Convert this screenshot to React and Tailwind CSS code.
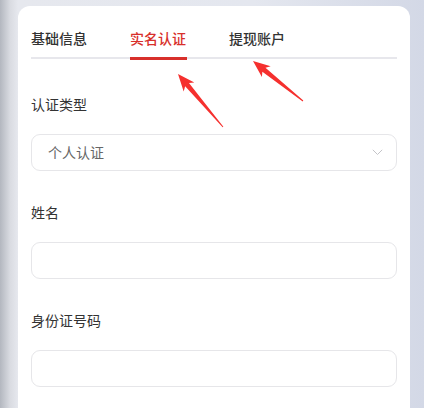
import React from "react";

const font = { fontFamily: '"Noto Sans CJK SC", "Noto Sans", sans-serif' };

function Field({ label, children, first }) {
  return (
    <div className={first ? "mt-[35px]" : "mt-[31px]"}>
      <div className="h-[20px] leading-[20px] text-[14px] text-[#333333]">{label}</div>
      <div className="mt-[20px]">{children}</div>
    </div>
  );
}

function Box({ children }) {
  return (
    <div className="h-[37px] w-full rounded-[9px] border border-[#e6e6e9] bg-white flex items-center pl-[16px] pr-[13px]">
      {children}
    </div>
  );
}

export default function App() {
  const tabs = [
    { t: "基础信息", active: false },
    { t: "实名认证", active: true },
    { t: "提现账户", active: false },
  ];
  return (
    <div
      className="relative w-[424px] h-[408px] overflow-hidden pt-[6px] pl-[18px] bg-[linear-gradient(to_right,#b3b7bf_0px,#d9dbe1_10px,#e6e8ee_18px,#e4e7ef_60%,#d3d8e6_100%)]"
      style={font}
    >
      <div className="w-[392px] h-[430px] bg-white rounded-t-[12px] px-[13px] pt-[22px]">
        <div className="flex gap-[42px] border-b-2 border-[#e7e7ec]">
          {tabs.map((x) => (
            <div key={x.t} className="relative w-[57px] pb-[9px]">
              <div
                className={
                  "h-[20px] leading-[20px] text-[14px] font-medium whitespace-nowrap " +
                  (x.active ? "text-[#d8302b]" : "text-[#333333]")
                }
              >
                {x.t}
              </div>
              {x.active && (
                <div className="absolute left-0 right-0 bottom-[-3px] h-[3px] bg-[#d8302b]" />
              )}
            </div>
          ))}
        </div>

        <Field label="认证类型" first>
          <Box>
            <span className="flex-1 text-[14px] text-[#666666]">个人认证</span>
            <svg width="11" height="7" viewBox="0 0 11 7" className="mr-[0px]">
              <path d="M0.8 0.8 L5.5 5.5 L10.2 0.8" fill="none" stroke="#c4c4c8" strokeWidth="1" />
            </svg>
          </Box>
        </Field>

        <Field label="姓名">
          <Box />
        </Field>

        <Field label="身份证号码">
          <Box />
        </Field>
      </div>

      <svg className="absolute left-0 top-0 pointer-events-none" width="424" height="408">
        <polygon
          fill="#f5302e"
          points="178,74 194.33,82.43 188.97,83.05 223.38,126.68 222.62,127.32 185.15,86.29 183.67,91.49"
        />
        <polygon
          fill="#f5302e"
          points="253,61 270.66,66.15 265.49,67.8 303.31,100.61 302.69,101.39 262.37,71.7 261.9,77.09"
        />
      </svg>
    </div>
  );
}
